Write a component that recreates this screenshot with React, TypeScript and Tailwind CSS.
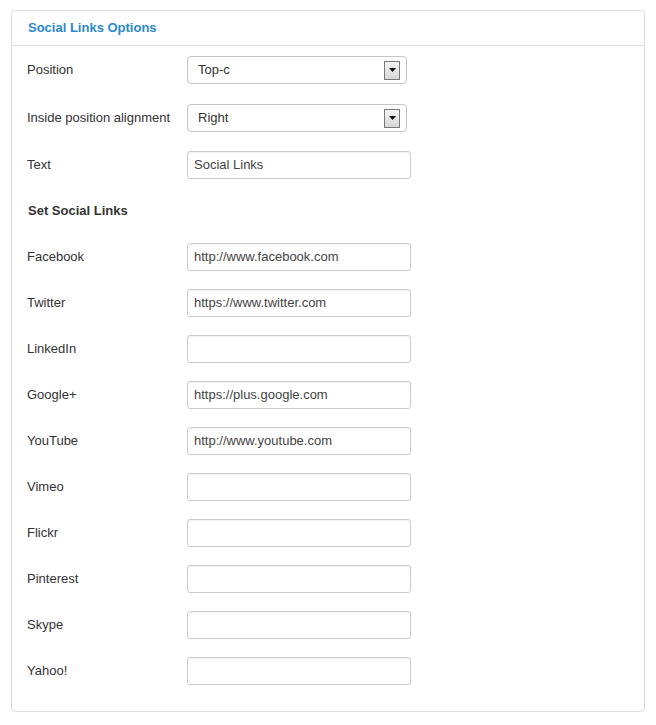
import React from "react";

const links = [
  { label: "Facebook", value: "http://www.facebook.com" },
  { label: "Twitter", value: "https://www.twitter.com" },
  { label: "LinkedIn", value: "" },
  { label: "Google+", value: "https://plus.google.com" },
  { label: "YouTube", value: "http://www.youtube.com" },
  { label: "Vimeo", value: "" },
  { label: "Flickr", value: "" },
  { label: "Pinterest", value: "" },
  { label: "Skype", value: "" },
  { label: "Yahoo!", value: "" },
];

function FakeSelect({ value }: { value: string }) {
  return (
    <div className="flex h-[28px] w-[220px] items-center justify-between rounded-[4px] border border-[#c4c4c4] bg-white pl-[10px] pr-[6px]">
      <span className="text-[13px] text-[#333]">{value}</span>
      <span className="flex h-[19px] w-[16px] items-center justify-center border border-[#7a7a7a] bg-gradient-to-b from-[#f4f4f4] to-[#d8d8d8]">
        <svg width="7" height="4" viewBox="0 0 7 4">
          <path d="M0 0h7L3.5 4z" fill="#111" />
        </svg>
      </span>
    </div>
  );
}

function TextBox({ value }: { value: string }) {
  return (
    <div className="flex h-[28px] w-[224px] items-center rounded-[3px] border border-[#cccccc] bg-white px-[6px] shadow-[inset_0_1px_1px_rgba(0,0,0,0.06)]">
      <span className="text-[13px] text-[#444]">{value}</span>
    </div>
  );
}

function Row({ label, h, children }: { label: string; h: string; children: React.ReactNode }) {
  return (
    <div className={`flex items-center ${h}`}>
      <div className="w-[160px] text-[13px] text-[#333]">{label}</div>
      {children}
    </div>
  );
}

export default function App() {
  return (
    <div className="min-h-[725px] bg-white pl-[11px] pt-[10px] font-['Liberation_Sans',Arial,sans-serif]">
      <div className="w-[634px] rounded-[4px] border border-[#dddddd] bg-white">
        <div className="flex h-[35px] items-center border-b border-[#e3e3e3] pl-[16px]">
          <h2 className="text-[13px] font-bold text-[#2a88cf]">Social Links Options</h2>
        </div>
        <div className="pb-[17px] pl-[15px]">
          <Row label="Position" h="h-[48px]">
            <FakeSelect value="Top-c" />
          </Row>
          <Row label="Inside position alignment" h="h-[48px]">
            <FakeSelect value="Right" />
          </Row>
          <Row label="Text" h="h-[46px]">
            <TextBox value="Social Links" />
          </Row>
          <div className="flex h-[46px] items-center pl-[1px] text-[13px] font-bold text-[#333]">
            Set Social Links
          </div>
          {links.map((l) => (
            <Row key={l.label} label={l.label} h="h-[46px]">
              <TextBox value={l.value} />
            </Row>
          ))}
        </div>
      </div>
    </div>
  );
}
